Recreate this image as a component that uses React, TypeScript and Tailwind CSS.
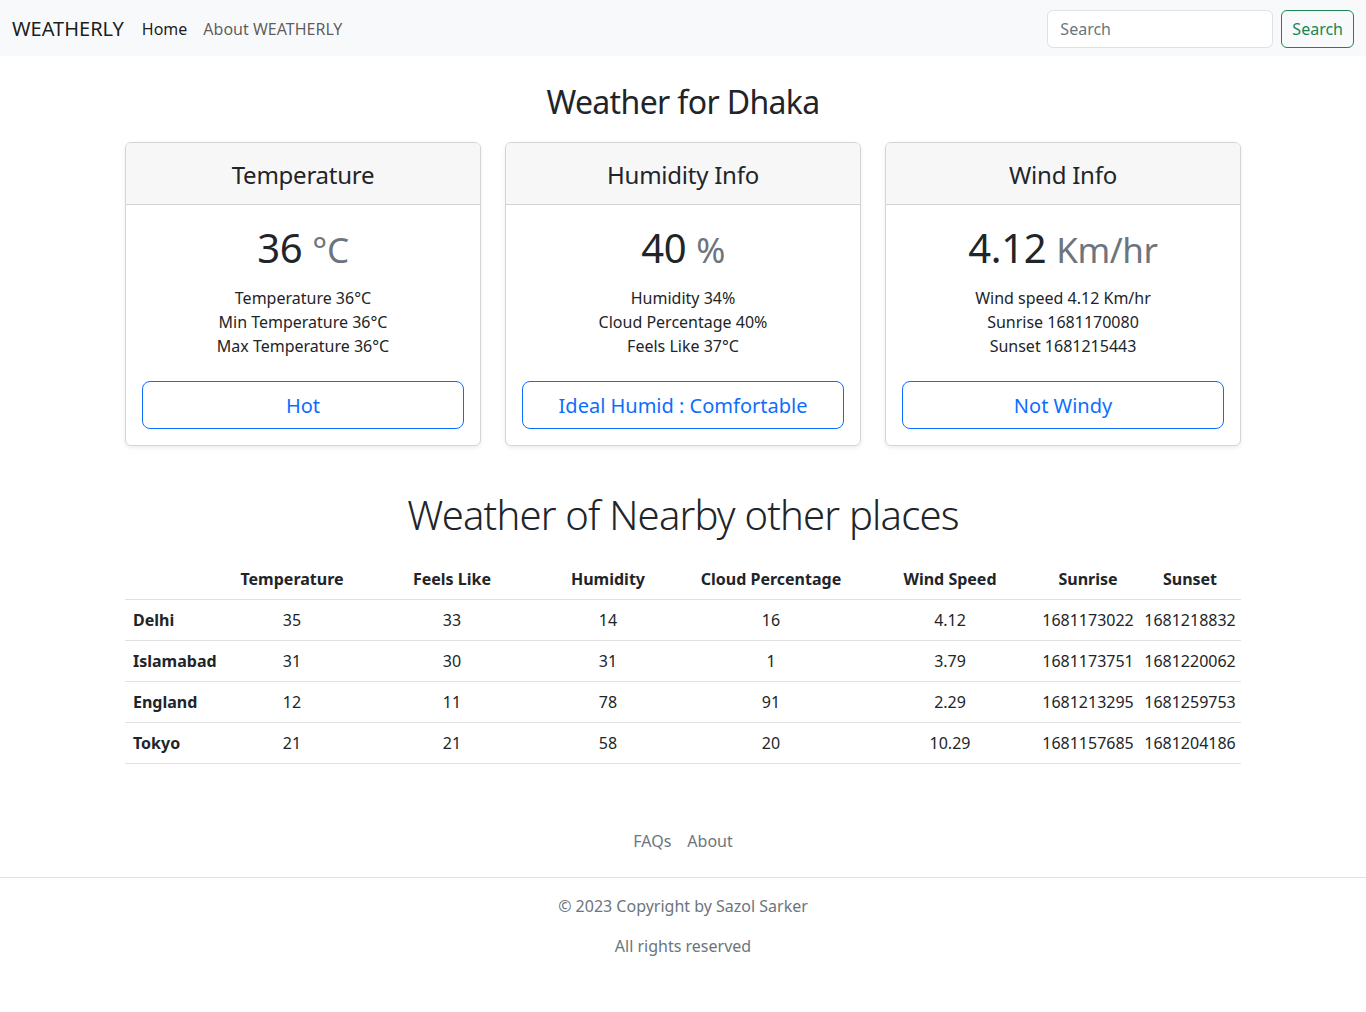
const cards = [
  {
    title: "Temperature",
    value: "36",
    unit: "°C",
    lines: ["Temperature 36°C", "Min Temperature 36°C", "Max Temperature 36°C"],
    label: "Hot",
  },
  {
    title: "Humidity Info",
    value: "40",
    unit: "%",
    lines: ["Humidity 34%", "Cloud Percentage 40%", "Feels Like 37°C"],
    label: "Ideal Humid : Comfortable",
  },
  {
    title: "Wind Info",
    value: "4.12",
    unit: "Km/hr",
    lines: ["Wind speed 4.12 Km/hr", "Sunrise 1681170080", "Sunset 1681215443"],
    label: "Not Windy",
  },
];

const cols = [
  { name: "", w: "w-[92px]" },
  { name: "Temperature", w: "w-[150px]" },
  { name: "Feels Like", w: "w-[170px]" },
  { name: "Humidity", w: "w-[142px]" },
  { name: "Cloud Percentage", w: "w-[184px]" },
  { name: "Wind Speed", w: "w-[174px]" },
  { name: "Sunrise", w: "w-[102px]" },
  { name: "Sunset", w: "w-[102px]" },
];

const places = [
  ["Delhi", "35", "33", "14", "16", "4.12", "1681173022", "1681218832"],
  ["Islamabad", "31", "30", "31", "1", "3.79", "1681173751", "1681220062"],
  ["England", "12", "11", "78", "91", "2.29", "1681213295", "1681259753"],
  ["Tokyo", "21", "21", "58", "20", "10.29", "1681157685", "1681204186"],
];

function WeatherCard({ card }: { card: (typeof cards)[number] }) {
  return (
    <div className="flex-1 rounded-md border border-[#d4d4d5] bg-white shadow-[0_2px_4px_rgba(0,0,0,0.075)] overflow-hidden">
      <div className="h-[62px] flex items-center justify-center bg-[#f7f7f7] border-b border-[#d4d4d5]">
        <h4 className="text-[24px] leading-[29px] pt-[2px] tracking-[-0.01em] text-[#212529]">
          {card.title}
        </h4>
      </div>
      <div className="p-4 text-center">
        <h1 className="text-[40px] leading-[48px] pt-[3px] tracking-[-0.01em] text-[#212529]">
          {card.value} <small className="text-[35px] text-[#6c757d]">{card.unit}</small>
        </h1>
        <div className="mt-[12px] mb-[23px] text-[16px] leading-[24px] text-[#212529]">
          {card.lines.map((l) => (
            <div key={l}>{l}</div>
          ))}
        </div>
        <button className="w-full h-[48px] rounded-lg border border-[#0d6efd] text-[20px] pt-[1px] text-[#0d6efd] bg-white">
          {card.label}
        </button>
      </div>
    </div>
  );
}

export default function App() {
  return (
    <div className="min-h-screen bg-white text-[#212529] font-['Noto_Sans','Open_Sans',sans-serif] text-[16px]">
      <nav className="h-14 bg-[#f8f9fa] flex items-center px-3 pt-[2px]">
        <a className="text-[20px] text-black/90 mr-[10px]">WEATHERLY</a>
        <a className="px-2 text-black/90">Home</a>
        <a className="px-2 text-black/65">About WEATHERLY</a>
        <div className="ml-auto flex items-center gap-2">
          <input
            placeholder="Search"
            className="w-[226px] h-[38px] rounded-md border border-[#dee2e6] bg-white px-3 placeholder:text-[#6c757d] outline-none"
          />
          <button className="h-[38px] px-[10px] rounded-md border border-[#198754] text-[#198754]">
            Search
          </button>
        </div>
      </nav>

      <main className="w-[1140px] mx-auto px-3">
        <h2 className="text-[32px] leading-[38px] tracking-[-0.02em] text-center pt-[27px] pb-[21px]">
          Weather for Dhaka
        </h2>
        <div className="flex gap-6">
          {cards.map((c) => (
            <WeatherCard key={c.title} card={c} />
          ))}
        </div>

        <h1 className="text-[40px] leading-[48px] font-light tracking-[-0.02em] text-center mt-[45px] mb-[20px]">
          Weather of Nearby other places
        </h1>
        <table className="w-full table-fixed border-collapse">
          <thead>
            <tr className="border-b border-[#dee2e6]">
              {cols.map((c) => (
                <th key={c.name} className={`${c.w} py-2 px-2 font-bold leading-6 text-center`}>
                  {c.name}
                </th>
              ))}
            </tr>
          </thead>
          <tbody>
            {places.map((row) => (
              <tr key={row[0]} className="border-b border-[#dee2e6]">
                {row.map((v, i) =>
                  i === 0 ? (
                    <th key={i} className="py-2 px-2 text-left font-bold leading-6">
                      {v}
                    </th>
                  ) : (
                    <td key={i} className="py-2 px-1 text-center leading-6 whitespace-nowrap">
                      {v}
                    </td>
                  )
                )}
              </tr>
            ))}
          </tbody>
        </table>
      </main>

      <footer className="mt-[57px] pb-10">
        <ul className="flex justify-center pb-4 mb-4 border-b border-[#dee2e6]">
          <li className="px-2 py-2 text-[#6c757d] leading-6">FAQs</li>
          <li className="px-2 py-2 text-[#6c757d] leading-6">About</li>
        </ul>
        <p className="text-center text-[#6c757d] leading-6 mb-4">© 2023 Copyright by Sazol Sarker</p>
        <p className="text-center text-[#6c757d] leading-6">All rights reserved</p>
      </footer>
    </div>
  );
}
